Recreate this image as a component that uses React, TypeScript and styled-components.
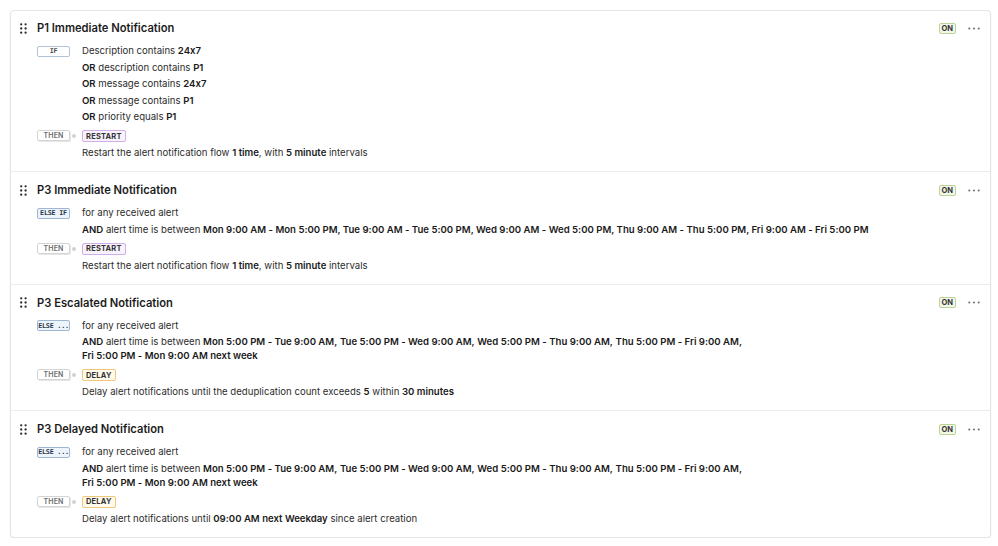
import React from "react";
import styled, { createGlobalStyle } from "styled-components";

const GlobalStyle = createGlobalStyle`
  html, body {
    margin: 0;
    padding: 0;
    background: #ffffff;
  }
  body {
    font-family: Inter, "Noto Sans", "Liberation Sans", sans-serif;
    font-feature-settings: "calt" 0;
    color: #2b2b2b;
  }
`;

const Panel = styled.div`
  margin: 10px 7px 0 10px;
  border: 1px solid #e4e4e4;
  border-radius: 4px;
  box-shadow: 0 1px 2px rgba(0, 0, 0, 0.07);
  background: #fff;
`;

const Card = styled.section`
  padding: 7px 10px 11px 9px;
  & + & {
    border-top: 1px solid #ececec;
    padding-top: 8px;
  }
`;

const TitleRow = styled.div`
  display: flex;
  align-items: center;
  height: 20px;
`;

const Handle = styled.span`
  display: flex;
  width: 7px;
  margin-right: 10px;
`;

const Title = styled.h3`
  margin: 0;
  flex: 1;
  font-size: 11.2px;
  font-weight: 600;
  color: #1c1c1c;
`;

const OnBadge = styled.span`
  display: inline-flex;
  align-items: center;
  justify-content: center;
  height: 9px;
  padding: 0 2px;
  border: 1px solid #b9d494;
  background: #f2f8e8;
  border-radius: 2px;
  font-size: 7.5px;
  font-weight: 700;
  color: #333;
  margin-right: 12px;
`;

const More = styled.span`
  display: flex;
  width: 12px;
  justify-content: center;
`;

const Body = styled.div`
  display: grid;
  grid-template-columns: 45px 1fr;
  row-gap: 6px;
  margin-top: 6px;
  margin-left: 17px;
`;

const Lines = styled.div`
  display: flex;
  flex-direction: column;
  gap: 2.5px;
  max-width: 800px;
`;

const Line = styled.div`
  font-size: 9.6px;
  line-height: 14px;
  color: #2c2c2c;
`;

const B = styled.b`
  font-weight: 600;
  color: #1a1a1a;
`;

const Seg = styled.span`
  white-space: nowrap;
`;

const CondCell = styled.div`
  display: flex;
  align-items: flex-start;
  padding-top: 1.5px;
`;

const CondBadge = styled.span<{ $kind: "if" | "elseif" }>`
  display: flex;
  align-items: center;
  justify-content: center;
  box-sizing: border-box;
  width: 33px;
  height: 11px;
  border-radius: 2px;
  white-space: nowrap;
  overflow: hidden;
  font-family: "DejaVu Sans Mono", "Liberation Mono", monospace;
  font-size: 6.7px;
  font-weight: 700;
  letter-spacing: -0.2px;
  border: 1px solid ${(p) => (p.$kind === "if" ? "#b3c3d6" : "#9fb6d3")};
  background: ${(p) => (p.$kind === "if" ? "#ffffff" : "#eef4fb")};
  color: ${(p) => (p.$kind === "if" ? "#4a4a4a" : "#26364a")};
`;

const ThenCell = styled.div`
  display: flex;
  align-items: flex-start;
  height: 12px;
`;

const ThenBadge = styled.span`
  display: flex;
  align-items: center;
  justify-content: center;
  box-sizing: border-box;
  width: 33px;
  height: 11px;
  border: 1px solid #d4d4d4;
  border-radius: 2px;
  box-shadow: 1px 1px 0 #e6e6e6;
  font-size: 7px;
  font-weight: 600;
  color: #6b6b6b;
  letter-spacing: 0.2px;
`;

const Dot = styled.span`
  width: 4px;
  height: 4px;
  border-radius: 50%;
  background: #d2d2d2;
  margin: 4px 0 0 2px;
`;

const ActionCol = styled.div`
  display: flex;
  flex-direction: column;
  align-items: flex-start;
  gap: 4px;
`;

const ActionBadge = styled.span<{ $kind: "restart" | "delay" }>`
  display: inline-flex;
  align-items: center;
  box-sizing: border-box;
  height: 12px;
  padding: 0 3px;
  border-radius: 2px;
  font-size: 7.5px;
  font-weight: 700;
  color: #333;
  letter-spacing: 0.2px;
  border: 1px solid ${(p) => (p.$kind === "restart" ? "#cfaeea" : "#efc77a")};
  background: ${(p) => (p.$kind === "restart" ? "#f8f2fd" : "#fffaeb")};
`;

const DragIcon = () => (
  <svg width="7" height="11" viewBox="0 0 7 11">
    {[1.3, 5.5, 9.7].map((y) =>
      [1.2, 5.6].map((x) => (
        <circle key={`${x}-${y}`} cx={x} cy={y} r="1.15" fill="#2e2e2e" />
      ))
    )}
  </svg>
);

const DotsIcon = () => (
  <svg width="12" height="3" viewBox="0 0 12 3">
    <circle cx="1.3" cy="1.5" r="1" fill="#6a6a6a" />
    <circle cx="6" cy="1.5" r="1" fill="#6a6a6a" />
    <circle cx="10.7" cy="1.5" r="1" fill="#6a6a6a" />
  </svg>
);

type Rule = {
  title: string;
  cond: { label: string; kind: "if" | "elseif" };
  lines: React.ReactNode[];
  action: { label: string; kind: "restart" | "delay" };
  text: React.ReactNode;
};

const offHours = (
  <>
    <B>AND</B> alert time is between{" "}
    <Seg>
      <B>Mon 5:00 PM - Tue 9:00 AM,</B>
    </Seg>{" "}
    <Seg>
      <B>Tue 5:00 PM - Wed 9:00 AM,</B>
    </Seg>{" "}
    <Seg>
      <B>Wed 5:00 PM - Thu 9:00 AM,</B>
    </Seg>{" "}
    <Seg>
      <B>Thu 5:00 PM - Fri 9:00 AM,</B>
    </Seg>{" "}
    <Seg>
      <B>Fri 5:00 PM - Mon 9:00 AM next week</B>
    </Seg>
  </>
);

const restartText = (
  <>
    Restart the alert notification flow <B>1 time</B>, with <B>5 minute</B>{" "}
    intervals
  </>
);

const RULES: Rule[] = [
  {
    title: "P1 Immediate Notification",
    cond: { label: "IF", kind: "if" },
    lines: [
      <>
        Description contains <B>24x7</B>
      </>,
      <>
        <B>OR</B> description contains <B>P1</B>
      </>,
      <>
        <B>OR</B> message contains <B>24x7</B>
      </>,
      <>
        <B>OR</B> message contains <B>P1</B>
      </>,
      <>
        <B>OR</B> priority equals <B>P1</B>
      </>,
    ],
    action: { label: "RESTART", kind: "restart" },
    text: restartText,
  },
  {
    title: "P3 Immediate Notification",
    cond: { label: "ELSE IF", kind: "elseif" },
    lines: [
      <>for any received alert</>,
      <>
        <B>AND</B> alert time is between{" "}
        <B>
          Mon 9:00 AM - Mon 5:00 PM, Tue 9:00 AM - Tue 5:00 PM, Wed 9:00 AM -
          Wed 5:00 PM, Thu 9:00 AM - Thu 5:00 PM, Fri 9:00 AM - Fri 5:00 PM
        </B>
      </>,
    ],
    action: { label: "RESTART", kind: "restart" },
    text: restartText,
  },
  {
    title: "P3 Escalated Notification",
    cond: { label: "ELSE ...", kind: "elseif" },
    lines: [<>for any received alert</>, offHours],
    action: { label: "DELAY", kind: "delay" },
    text: (
      <>
        Delay alert notifications until the deduplication count exceeds{" "}
        <B>5</B> within <B>30 minutes</B>
      </>
    ),
  },
  {
    title: "P3 Delayed Notification",
    cond: { label: "ELSE ...", kind: "elseif" },
    lines: [<>for any received alert</>, offHours],
    action: { label: "DELAY", kind: "delay" },
    text: (
      <>
        Delay alert notifications until <B>09:00 AM next Weekday</B> since
        alert creation
      </>
    ),
  },
];

export default function App() {
  return (
    <>
      <GlobalStyle />
      <Panel>
        {RULES.map((rule) => (
          <Card key={rule.title}>
            <TitleRow>
              <Handle>
                <DragIcon />
              </Handle>
              <Title>{rule.title}</Title>
              <OnBadge>ON</OnBadge>
              <More>
                <DotsIcon />
              </More>
            </TitleRow>
            <Body>
              <CondCell>
                <CondBadge $kind={rule.cond.kind}>{rule.cond.label}</CondBadge>
              </CondCell>
              <Lines>
                {rule.lines.map((l, i) => (
                  <Line key={i}>{l}</Line>
                ))}
              </Lines>
              <ThenCell>
                <ThenBadge>THEN</ThenBadge>
                <Dot />
              </ThenCell>
              <ActionCol>
                <ActionBadge $kind={rule.action.kind}>
                  {rule.action.label}
                </ActionBadge>
                <Line>{rule.text}</Line>
              </ActionCol>
            </Body>
          </Card>
        ))}
      </Panel>
    </>
  );
}
